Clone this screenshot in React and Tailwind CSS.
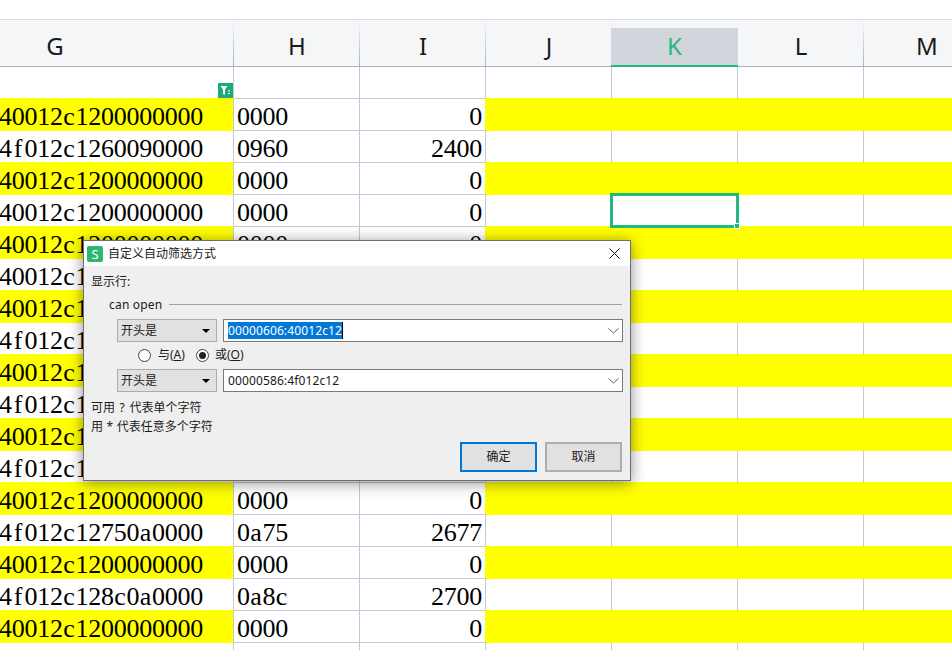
const Y = "40012c1200000000";
const rows = [
  { g: "", h: "", i: "", empty: true },
  { g: Y, h: "0000", i: "0", y: true },
  { g: "4f012c1260090000", h: "0960", i: "2400" },
  { g: Y, h: "0000", i: "0", y: true },
  { g: Y, h: "0000", i: "0", selected: true },
  { g: Y, h: "0000", i: "0", y: true },
  { g: Y, h: "0000", i: "0" },
  { g: Y, h: "0000", i: "0", y: true },
  { g: "4f012c1262090000", h: "0962", i: "2402" },
  { g: Y, h: "0000", i: "0", y: true },
  { g: "4f012c1264090000", h: "0964", i: "2404" },
  { g: Y, h: "0000", i: "0", y: true },
  { g: "4f012c1266090000", h: "0966", i: "2406" },
  { g: Y, h: "0000", i: "0", y: true },
  { g: "4f012c12750a0000", h: "0a75", i: "2677" },
  { g: Y, h: "0000", i: "0", y: true },
  { g: "4f012c128c0a0000", h: "0a8c", i: "2700" },
  { g: Y, h: "0000", i: "0", y: true },
  { g: "", h: "", i: "", empty: true },
];

function Cells({ text }) {
  return (
    <span className="flex">
      {text.split("").map((c, n) => (
        <span key={n} className="inline-block w-[12.75px] text-center">{c}</span>
      ))}
    </span>
  );
}

function HeadCell({ label, wide }) {
  return (
    <div className={wide ? "flex w-[234px] shrink-0" : "flex w-[126px] shrink-0"}>
      <div className={wide ? "flex-1 pr-[123px] pt-[8px] text-center" : "flex-1 pt-[8px] pl-[1px] text-center"}>{label}</div>
      <div className="w-px bg-linear-to-b from-[#f5f6f8] to-[#a8b1c8]" />
    </div>
  );
}

function Row({ r }) {
  const line = "border-r border-b border-[#c3c8d8]";
  const yel = "border-r border-b border-[#ffff00] bg-[#ffff00] shadow-[-1px_-1px_0_#ffff00]";
  const plain = r.y ? yel : line;
  return (
    <div className="flex h-[32px] w-[990px] font-['Liberation_Serif',serif] text-[26px] leading-[36px] text-black">
      <div
        className={
          r.y
            ? "relative w-[234px] shrink-0 border-r border-b border-r-[#c3c8d8] border-b-[#ffff00] bg-[#ffff00] shadow-[0_-1px_0_#ffff00]"
            : "relative w-[234px] shrink-0 " + line
        }
      >
        <div className="ml-[-1px]"><Cells text={r.g} /></div>
      </div>
      <div className={"w-[126px] shrink-0 pl-[3px] " + line}><Cells text={r.h} /></div>
      <div className={"flex w-[126px] shrink-0 justify-end pr-[3px] " + line}><Cells text={r.i} /></div>
      <div className={"w-[126px] shrink-0 " + plain} />
      <div className={"relative w-[126px] shrink-0 " + plain}>
        {r.selected && (
          <>
            <div className="absolute top-[-2px] right-[-2px] bottom-[-2px] left-[-2px] z-10 border-[3px] border-[#1fbb7d]" />
            <div className="absolute right-[-3px] bottom-[-3px] z-20 h-[6px] w-[6px] border border-white bg-[#1fbb7d]" />
          </>
        )}
      </div>
      <div className={"w-[126px] shrink-0 " + plain} />
      <div className={"w-[126px] shrink-0 " + plain} />
    </div>
  );
}

function Chevron() {
  return (
    <svg width="11" height="6" viewBox="0 0 11 6" className="shrink-0">
      <polyline points="0.5,0.5 5.5,5 10.5,0.5" fill="none" stroke="#606060" strokeWidth="1" />
    </svg>
  );
}

function Select() {
  return (
    <div className="flex h-[23px] w-[100px] shrink-0 items-center justify-between border border-[#adadad] bg-[#e1e1e1] pr-[6px] pl-[3px] text-[12px]">
      <span>开头是</span>
      <span className="h-0 w-0 border-x-[4px] border-t-[4px] border-x-transparent border-t-black" />
    </div>
  );
}

function Dialog() {
  return (
    <div className="absolute top-[240px] left-[83px] z-30 h-[241px] w-[548px] border border-[#6e6e6e] bg-[#efefef] font-['Noto_Sans','Noto_Sans_CJK_SC',sans-serif] text-[12px] leading-[16px] text-[#1a1a1a] shadow-[0_2px_14px_rgba(0,0,0,0.45)]">
      <div className="flex h-[25px] items-center bg-white pr-[10px] pl-[3px]">
        <div className="flex h-[16px] w-[16px] items-center justify-center rounded-[2px] bg-[#2bb673] text-[13px] font-normal text-white">S</div>
        <span className="ml-[5px] flex-1">自定义自动筛选方式</span>
        <svg width="11" height="11" viewBox="0 0 11 11">
          <path d="M0.5 0.5 L10.5 10.5 M10.5 0.5 L0.5 10.5" stroke="#111" strokeWidth="1" fill="none" />
        </svg>
      </div>

      <div className="mt-[8px] h-[16px] pl-[7px]">显示行:</div>

      <div className="mt-[6px] flex h-[16px] items-center pr-[8px] pl-[25px]">
        <span className="mt-[2px] tracking-[0.2px]">can open</span>
        <div className="ml-[7px] h-px flex-1 bg-[#a0a0a0]" />
      </div>

      <div className="mt-[7px] flex gap-[6px] pl-[33px]">
        <Select />
        <div className="flex h-[23px] w-[400px] items-center justify-between border border-[#7a7a7a] bg-white pr-[3px] pl-[4px]">
          <span className="h-[17px] border-r border-black bg-[#0078d7] leading-[17px] tracking-[0.12px] text-white">00000606:40012c12</span>
          <Chevron />
        </div>
      </div>

      <div className="mt-[4px] flex h-[18px] items-center pl-[54px]">
        <span className="h-[13px] w-[13px] rounded-full border border-[#444] bg-white" />
        <span className="ml-[7px]">与(<span className="underline">A</span>)</span>
        <span className="ml-[11px] flex h-[13px] w-[13px] items-center justify-center rounded-full border border-[#444] bg-white">
          <span className="h-[7px] w-[7px] rounded-full bg-[#222]" />
        </span>
        <span className="ml-[6px]">或(<span className="underline">O</span>)</span>
      </div>

      <div className="mt-[5px] flex gap-[6px] pl-[33px]">
        <Select />
        <div className="flex h-[23px] w-[400px] items-center justify-between border border-[#7a7a7a] bg-white pr-[3px] pl-[4px]">
          <span className="tracking-[0.12px]">00000586:4f012c12</span>
          <Chevron />
        </div>
      </div>

      <div className="mt-[8px] h-[16px] pl-[7px] [word-spacing:1.5px]">可用 ? 代表单个字符</div>
      <div className="mt-[3px] h-[16px] pl-[7px] [word-spacing:0.5px]">用 * 代表任意多个字符</div>

      <div className="mt-[7px] flex justify-end gap-[8px] pr-[8px]">
        <div className="flex h-[30px] w-[77px] items-center justify-center border-2 border-[#0078d7] bg-[#e1e1e1]">确定</div>
        <div className="flex h-[30px] w-[77px] items-center justify-center border-2 border-[#adadad] bg-[#e1e1e1]">取消</div>
      </div>
    </div>
  );
}

export default function App() {
  return (
    <div className="relative h-[650px] w-[952px] overflow-hidden bg-white">
      <div className="h-[19px]" />
      <div className="h-px bg-[#d8dae4]" />
      <div className="flex h-[47px] w-[990px] border-b border-[#a8b1c8] bg-[#f5f6f8] font-['Noto_Sans',sans-serif] text-[24px] leading-[36px] text-[#1a1a1a]">
        <HeadCell label="G" wide />
        <HeadCell label="H" />
        <HeadCell label="I" />
        <HeadCell label="J" />
        <div className="relative z-10 mb-[-1px] ml-[-1px] h-[39px] w-[127px] shrink-0 self-end border-b-2 border-[#1fbb7d] bg-[#d2d5db] text-center text-[#1fbb7d]">K</div>
        <HeadCell label="L" />
        <HeadCell label="M" />
      </div>

      <div className="relative">
        {rows.map((r, n) => (
          <Row key={n} r={r} />
        ))}
        <div className="absolute top-[16px] left-[218px] z-10 flex h-[15px] w-[15px] items-center justify-center bg-[#1fab75]">
          <svg width="11" height="11" viewBox="0 0 11 11">
            <path d="M0.5 1 H7.5 L5 4.5 V10 L3 9 V4.5 Z" fill="#fff" />
            <path d="M8 6 H10 M8 8.5 H10" stroke="#fff" strokeWidth="1" />
          </svg>
        </div>
      </div>

      <Dialog />
    </div>
  );
}
